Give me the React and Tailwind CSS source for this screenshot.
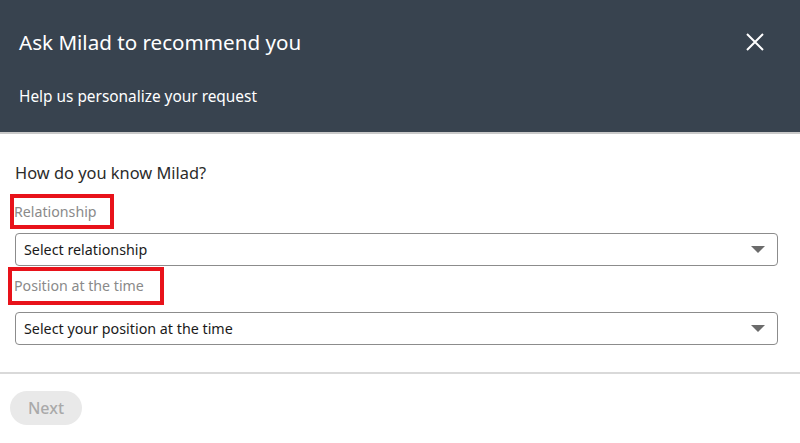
import React from "react";

function Caret() {
  return (
    <svg width="14" height="8" viewBox="0 0 14 8" className="shrink-0">
      <path d="M0 0 L14 0 L7 7 Z" fill="#6b6b6b" />
    </svg>
  );
}

function Select({ text }) {
  return (
    <div className="ml-[15px] mr-[22px] h-[33px] rounded-[4px] border border-[#8c8c8c] flex items-center justify-between pl-[8px] pr-[12px]">
      <span className="text-[14.3px] text-[#1a1a1a]">{text}</span>
      <Caret />
    </div>
  );
}

export default function App() {
  return (
    <div className="w-[800px] h-[443px] bg-white overflow-hidden" style={{ fontFamily: '"Noto Sans", "Open Sans", sans-serif' }}>
      <div className="h-[134px] bg-[#38434f] border-b-2 border-[#c9c9c9] flex flex-col px-[19px]">
        <div className="flex items-center justify-between mt-[28px]">
          <h1 className="text-[20.6px] leading-[28px] text-white">Ask Milad to recommend you</h1>
          <svg width="18" height="18" viewBox="0 0 18 18" className="mr-[17px]">
            <path d="M1 1 L17 17 M17 1 L1 17" stroke="white" strokeWidth="2" />
          </svg>
        </div>
        <p className="mt-[30px] text-[15.4px] leading-[22px] text-white">Help us personalize your request</p>
      </div>
      <div className="pt-[28px] flex flex-col">
        <p className="px-[15px] text-[16.4px] leading-[22px] text-[#2b2b2b]">How do you know Milad?</p>
        <div className="ml-[10px] mt-[10px] w-fit flex items-center border-4 border-[#e8121a] pr-[13px] h-[35px]">
          <span className="text-[14.2px] leading-[20px] text-[#8a8a8a]">Relationship</span>
        </div>
        <div className="mt-[4px]">
          <Select text="Select relationship" />
        </div>
        <div className="ml-[8px] mt-[1px] w-fit flex items-center border-4 border-[#e8121a] pl-[2px] pr-[16px] h-[38px]">
          <span className="text-[14.2px] leading-[20px] text-[#8a8a8a]">Position at the time</span>
        </div>
        <div className="mt-[7px]">
          <Select text="Select your position at the time" />
        </div>
      </div>
      <div className="mt-[27px] border-t-2 border-[#d9d9d9] px-[10px] pt-[17px]">
        <button className="h-[34px] w-[72px] rounded-full bg-[#e9e9e9] text-[16px] font-medium text-[#a9a9a9]">Next</button>
      </div>
    </div>
  );
}
